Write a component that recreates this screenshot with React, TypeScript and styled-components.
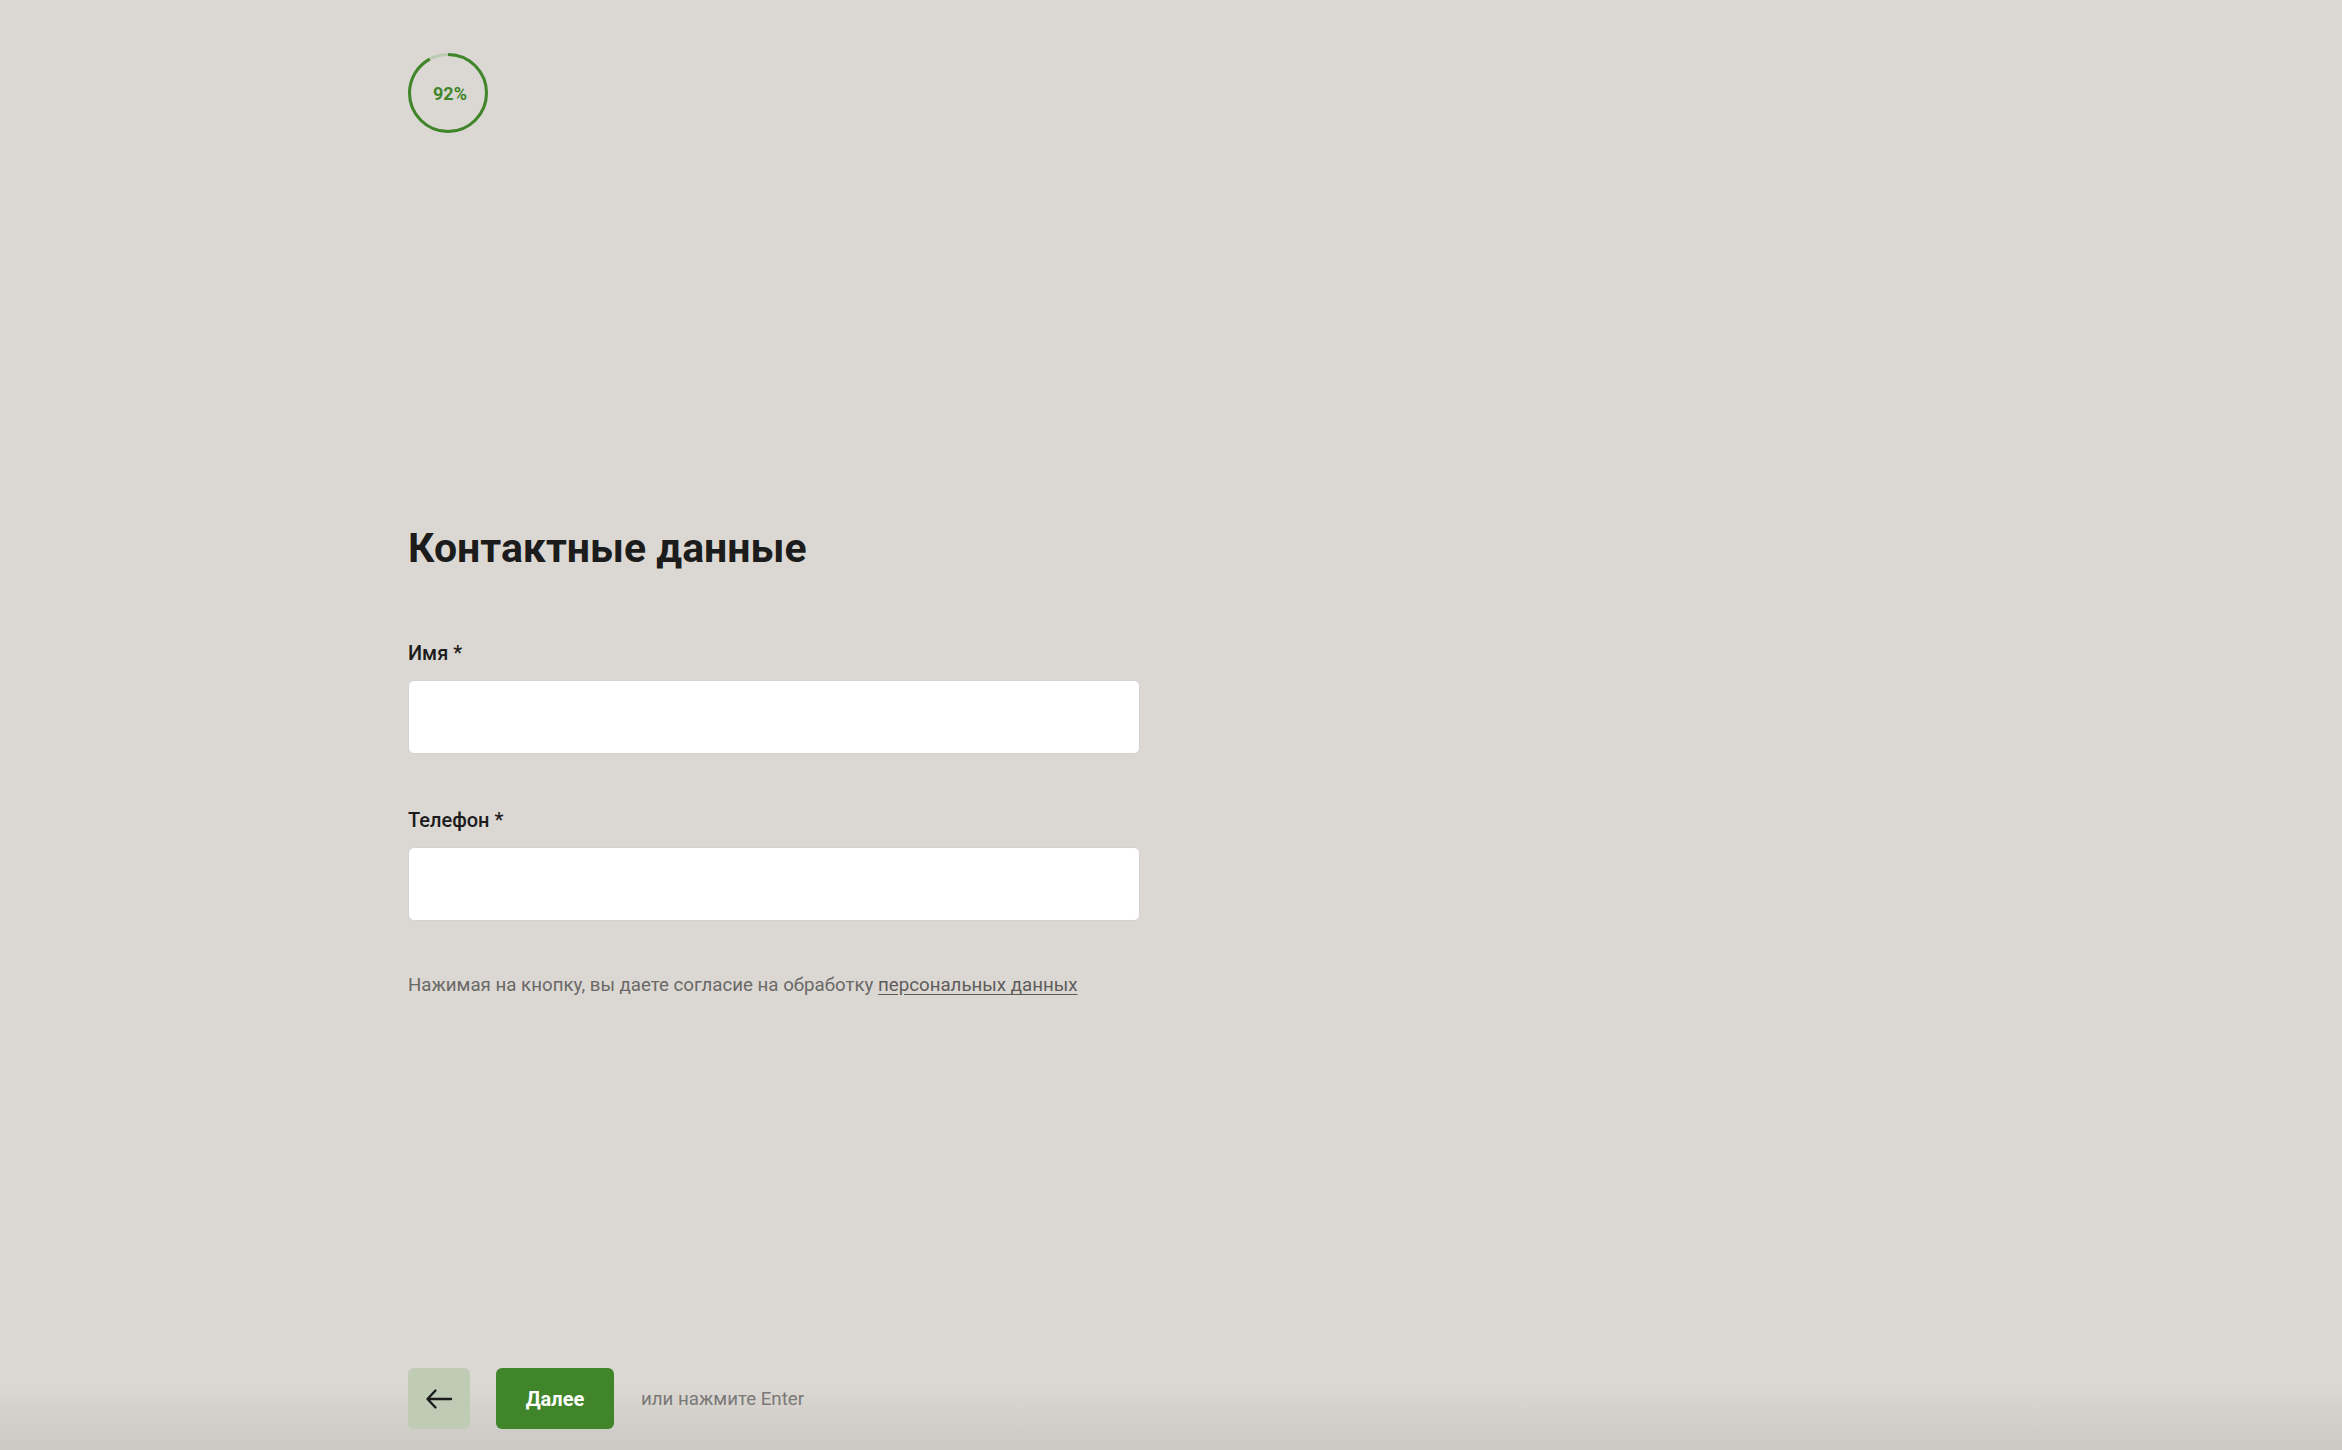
import styled, { createGlobalStyle } from "styled-components";

const GlobalStyle = createGlobalStyle`
  html, body {
    margin: 0;
    padding: 0;
    background: #dbd8d3;
  }
  body {
    font-family: Roboto, "Noto Sans", Arial, sans-serif;
    color: #1c1c1c;
  }
  * {
    box-sizing: border-box;
  }
`;

const Page = styled.div`
  min-height: 100vh;
  display: flex;
  flex-direction: column;
`;

const Container = styled.div`
  width: 1526px;
  margin: 0 auto;
`;

const Header = styled(Container)`
  padding-top: 53px;
`;

const Progress = styled.div`
  position: relative;
  width: 80px;
  height: 80px;
  display: flex;
  align-items: center;
  justify-content: center;
`;

const ProgressRing = styled.svg`
  position: absolute;
  inset: 0;
  transform: rotate(-90deg);
`;

const ProgressValue = styled.span`
  position: relative;
  font-size: 18px;
  font-weight: 700;
  color: #40852a;
  padding-left: 4px;
`;

const Main = styled(Container)`
  padding-top: 391px;
`;

const Title = styled.h1`
  margin: 0 0 69px;
  font-size: 41px;
  line-height: 48px;
  font-weight: 700;
  color: #1c1c1c;
`;

const Field = styled.div`
  display: flex;
  flex-direction: column;
  gap: 15px;
  margin-bottom: ${(p: { $mb: number }) => p.$mb}px;
`;

const Label = styled.label`
  font-size: 20px;
  line-height: 24px;
  font-weight: 500;
  color: #1c1c1c;
`;

const Input = styled.input`
  display: block;
  width: 732px;
  height: 74px;
  border: 1px solid #d4d2ce;
  border-radius: 6px;
  background: #ffffff;
  padding: 0 20px;
  font-family: inherit;
  font-size: 20px;
  outline: none;
`;

const Consent = styled.p`
  margin: 0;
  font-size: 18.7px;
  line-height: 24px;
  color: #6a6866;
`;

const ConsentLink = styled.a`
  color: #5e5c5a;
  text-decoration: underline;
  text-underline-offset: 3px;
  cursor: pointer;
`;

const Footer = styled.footer`
  margin-top: auto;
  padding: 30px 0 21px;
  background: linear-gradient(
    to bottom,
    rgba(0, 0, 0, 0) 0%,
    rgba(0, 0, 0, 0) 40%,
    rgba(0, 0, 0, 0.07) 100%
  );
`;

const Actions = styled(Container)`
  display: flex;
  align-items: center;
`;

const BackButton = styled.button`
  width: 62px;
  height: 61px;
  border: none;
  border-radius: 6px;
  background: #bfcbb5;
  display: flex;
  align-items: center;
  justify-content: center;
  margin-right: 26px;
  cursor: pointer;
  padding: 0;
`;

const NextButton = styled.button`
  width: 118px;
  height: 61px;
  border: none;
  border-radius: 6px;
  background: #40852a;
  color: #ffffff;
  font-family: inherit;
  font-size: 20px;
  font-weight: 700;
  cursor: pointer;
  margin-right: 27px;
`;

const Hint = styled.span`
  font-size: 18.7px;
  color: #7a7876;
`;

const R = 38.5;
const C = 2 * Math.PI * R;

function ArrowLeft() {
  return (
    <svg width="28" height="22" viewBox="0 0 28 22" fill="none">
      <path
        d="M26 11H3M10.5 2.5L2.5 11l8 8.5"
        stroke="#1c1c1c"
        strokeWidth="2.4"
        strokeLinecap="round"
        strokeLinejoin="round"
      />
    </svg>
  );
}

export default function App() {
  const percent = 92;
  return (
    <>
      <GlobalStyle />
      <Page>
        <Header>
          <Progress>
            <ProgressRing width="80" height="80" viewBox="0 0 80 80">
              <circle cx="40" cy="40" r={R} fill="none" stroke="#b9cab0" strokeWidth="3" />
              <circle
                cx="40"
                cy="40"
                r={R}
                fill="none"
                stroke="#40852a"
                strokeWidth="3"
                strokeDasharray={`${(C * percent) / 100} ${C}`}
              />
            </ProgressRing>
            <ProgressValue>{percent}%</ProgressValue>
          </Progress>
        </Header>
        <Main>
          <Title>Контактные данные</Title>
          <Field $mb={54}>
            <Label>Имя *</Label>
            <Input type="text" />
          </Field>
          <Field $mb={52}>
            <Label>Телефон *</Label>
            <Input type="tel" />
          </Field>
          <Consent>
            Нажимая на кнопку, вы даете согласие на обработку{" "}
            <ConsentLink>персональных данных</ConsentLink>
          </Consent>
        </Main>
        <Footer>
          <Actions>
            <BackButton aria-label="Назад">
              <ArrowLeft />
            </BackButton>
            <NextButton>Далее</NextButton>
            <Hint>или нажмите Enter</Hint>
          </Actions>
        </Footer>
      </Page>
    </>
  );
}
